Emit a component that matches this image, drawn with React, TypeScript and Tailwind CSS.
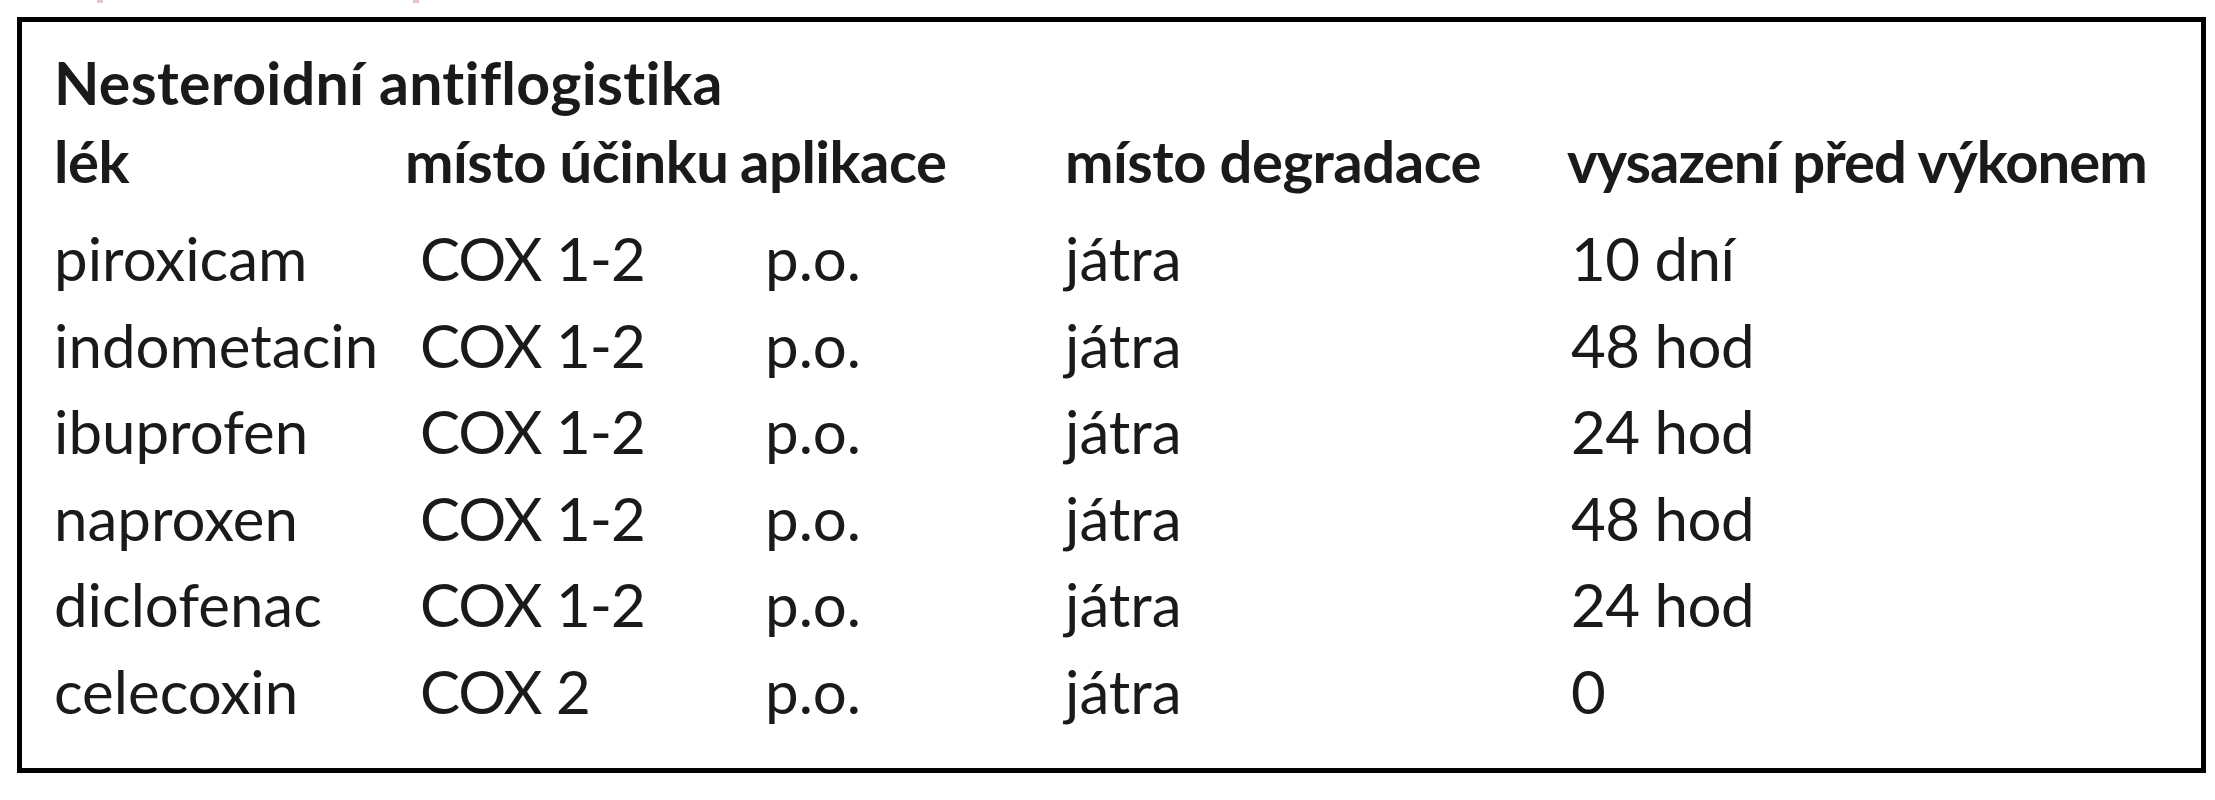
const ROWS: Array<[string, string, string, string, string]> = [
  ['piroxicam', 'COX 1-2', 'p.o.', 'játra', '10 dní'],
  ['indometacin', 'COX 1-2', 'p.o.', 'játra', '48 hod'],
  ['ibuprofen', 'COX 1-2', 'p.o.', 'játra', '24 hod'],
  ['naproxen', 'COX 1-2', 'p.o.', 'játra', '48 hod'],
  ['diclofenac', 'COX 1-2', 'p.o.', 'játra', '24 hod'],
  ['celecoxin', 'COX 2', 'p.o.', 'játra', '0'],
]

const HEADERS = ['lék', 'místo účinku', 'aplikace', 'místo degradace']

export default function App() {
  return (
    <div className="w-[2215px] h-[800px] bg-white text-[#1a1a1a] font-['Lato',sans-serif]">
      {/* zbytky předchozího obsahu nad rámečkem */}
      <div className="flex h-[17px]">
        <span className="ml-[97px] w-[6px] h-[3px] bg-[#e6c3cf]" />
        <span className="ml-[310px] w-[6px] h-[3px] bg-[#e6c3cf]" />
      </div>

      <div className="ml-[17px] w-[2189px] h-[756px] border-[5px] border-black pl-[32px] pt-[29px]">
        <div className="text-[59px] leading-[64px] font-bold tracking-[0.3px]">Nesteroidní antiflogistika</div>

        <div className="mt-[14px] grid grid-cols-[351px_335px_325px_502px_1fr] text-[58px] leading-[64px] font-bold tracking-[-0.5px]">
          {HEADERS.map((h) => (
            <div key={h} className="whitespace-nowrap">{h}</div>
          ))}
          <div className="whitespace-nowrap tracking-[-1px]">vysazení před výkonem</div>
        </div>

        <div className="mt-[22px] grid grid-cols-[351px_335px_325px_502px_1fr] text-[60px] leading-[86.6px]">
          {ROWS.map((r) => (
            <div key={r[0]} className="contents">
              <div className="whitespace-nowrap">{r[0]}</div>
              <div className="whitespace-nowrap pl-[15px] tracking-[-1px]">{r[1]}</div>
              <div className="whitespace-nowrap pl-[25px]">{r[2]}</div>
              <div className="whitespace-nowrap">{r[3]}</div>
              <div className="whitespace-nowrap pl-[4px] tracking-[-0.5px]">{r[4]}</div>
            </div>
          ))}
        </div>
      </div>
    </div>
  )
}
